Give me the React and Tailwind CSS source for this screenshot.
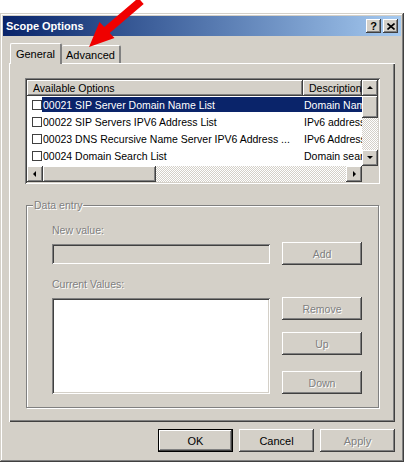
import React from 'react';

const raised = 'shadow-[inset_-1px_-1px_#404040,inset_1px_1px_#ffffff,inset_-2px_-2px_#808080,inset_2px_2px_#d4d0c8]';
const sunken = 'shadow-[inset_1px_1px_#808080,inset_-1px_-1px_#ffffff,inset_2px_2px_#404040,inset_-2px_-2px_#d4d0c8]';
const disabledText = 'text-[#808080] [text-shadow:1px_1px_#ffffff]';
const dither = 'bg-[image:repeating-conic-gradient(#ffffff_0_25%,#d4d0c8_0_50%)] bg-[length:2px_2px]';

function Arrow({ dir }) {
  // little black triangles for scroll buttons
  const pts = {
    up: '1,5 4,2 7,5',
    down: '1,2 4,5 7,2',
    left: '5,1 2,4 5,7',
    right: '3,1 6,4 3,7',
  }[dir];
  return (
    <svg width="8" height="8" viewBox="0 0 8 8">
      <polygon points={pts} fill="#000" />
    </svg>
  );
}

function ScrollBtn({ dir }) {
  return (
    <div className={`w-[16px] h-[16px] bg-[#d4d0c8] flex items-center justify-center ${raised}`}>
      <Arrow dir={dir} />
    </div>
  );
}

function Btn({ children, disabled, isDefault, className = '' }) {
  return (
    <div className={`${isDefault ? 'border border-black' : ''} ${className}`}>
      <div className={`h-full flex items-center justify-center bg-[#d4d0c8] ${raised} ${disabled ? disabledText : 'text-black'}`}>
        {children}
      </div>
    </div>
  );
}

export default function App() {
  const rows = [
    { code: '00021 SIP Server Domain Name List', desc: 'Domain Name', sel: true },
    { code: '00022 SIP Servers IPV6 Address List', desc: 'IPv6 address' },
    { code: '00023 DNS Recursive Name Server IPV6 Address ...', desc: 'IPv6 Address' },
    { code: '00024 Domain Search List', desc: 'Domain search' },
  ];

  return (
    <div className="relative w-[404px] h-[462px] bg-white pt-[13px] overflow-hidden font-['Liberation_Sans',Arial,sans-serif] text-[10.5px] leading-[12px]">
      {/* window */}
      <div className={`h-[449px] bg-[#d4d0c8] p-[3px] flex flex-col shadow-[inset_-1px_-1px_#404040,inset_1px_1px_#d4d0c8,inset_-2px_-2px_#808080,inset_2px_2px_#ffffff]`}>
        {/* title bar */}
        <div className="h-[20px] flex items-center pl-[3px] pr-[3px] bg-gradient-to-r from-[#0a246a] to-[#a6caf0]">
          <span className="flex-1 text-white font-bold text-[11px]">Scope Options</span>
          <div className={`w-[15px] h-[14px] bg-[#d4d0c8] flex items-center justify-center font-bold text-[11px] text-black ${raised}`}>?</div>
          <div className={`ml-[2px] w-[15px] h-[14px] bg-[#d4d0c8] flex items-center justify-center ${raised}`}>
            <svg width="8" height="7" viewBox="0 0 8 7">
              <path d="M0.5 0.5 L7.5 6.5 M7.5 0.5 L0.5 6.5" stroke="#000" strokeWidth="1.6" />
            </svg>
          </div>
        </div>

        <div className="flex-1 px-[6px] pt-[7px] flex flex-col">
          {/* tabs */}
          <div className="h-[20px] flex items-end">
            <div className="relative z-10 h-[21px] w-[52px] ml-[1px] -mb-[1px] bg-[#d4d0c8] border-l border-t border-white border-r-2 border-r-[#808080] rounded-t-[2px] flex items-start justify-center pt-[4px] text-[11px]">
              General
            </div>
            <div className="h-[18px] w-[59px] bg-[#d4d0c8] border-t border-white border-r-2 border-r-[#808080] rounded-t-[2px] flex items-start justify-center pt-[3px] text-[11px]">
              Advanced
            </div>
          </div>

          {/* tab panel */}
          <div className={`h-[359px] px-[15px] pt-[14px] bg-[#d4d0c8] border-l border-t border-white shadow-[inset_-1px_-1px_#404040,inset_-2px_-2px_#808080]`}>
            {/* list view */}
            <div className={`h-[106px] w-[355px] p-[2px] bg-white ${sunken}`}>
              <div className="h-full grid grid-cols-[1fr_16px] grid-rows-[1fr_16px]">
                <div className="overflow-hidden">
                  <div className="flex h-[16px]">
                    <div className={`w-[276px] h-full bg-[#d4d0c8] pl-[6px] flex items-center ${raised}`}>Available Options</div>
                    <div className={`flex-1 h-full bg-[#d4d0c8] pl-[6px] flex items-center ${raised}`}>Description</div>
                  </div>
                  {rows.map((r) => (
                    <div key={r.code} className="h-[17px] flex items-center">
                      <div className="w-[19px] pl-[5px] flex items-center">
                        <div className="w-[10px] h-[10px] bg-white border border-[#404040]" />
                      </div>
                      <div className={`h-[15px] flex items-center flex-1 ${r.sel ? 'bg-[#0a246a] text-white' : 'text-black'}`}>
                        <div className="w-[257px] pl-[1px] whitespace-nowrap overflow-hidden">{r.code}</div>
                        <div className="flex-1 pl-[5px] whitespace-nowrap overflow-hidden">{r.desc}</div>
                      </div>
                    </div>
                  ))}
                </div>
                {/* vertical scrollbar */}
                <div className={`flex flex-col ${dither}`}>
                  <ScrollBtn dir="up" />
                  <div className={`h-[22px] bg-[#d4d0c8] ${raised}`} />
                  <div className="flex-1" />
                  <ScrollBtn dir="down" />
                </div>
                {/* horizontal scrollbar */}
                <div className={`flex ${dither}`}>
                  <ScrollBtn dir="left" />
                  <div className={`w-[113px] bg-[#d4d0c8] ${raised}`} />
                  <div className="flex-1" />
                  <ScrollBtn dir="right" />
                </div>
                <div className="bg-[#d4d0c8]" />
              </div>
            </div>

            {/* data entry group */}
            <div className="relative mt-[21px] mx-[1px] w-[353px] h-[203px] border border-[#808080] shadow-[inset_1px_1px_#ffffff,1px_1px_#ffffff] pl-[25px] pt-[18px]">
              <span className={`absolute -top-[7px] left-[6px] px-[1px] bg-[#d4d0c8] ${disabledText}`}>Data entry</span>
              <div className={disabledText}>New value:</div>
              <div className="mt-[6px] flex items-center gap-[12px]">
                <div className={`w-[218px] h-[20px] bg-[#d4d0c8] ${sunken}`} />
                <Btn disabled className="w-[80px] h-[23px]">Add</Btn>
              </div>
              <div className={`mt-[13px] ${disabledText}`}>Current Values:</div>
              <div className="mt-[7px] flex items-start gap-[12px]">
                <div className={`mt-[1px] w-[218px] h-[96px] bg-white ${sunken}`} />
                <div className="flex flex-col">
                  <Btn disabled className="w-[80px] h-[23px]">Remove</Btn>
                  <Btn disabled className="mt-[12px] w-[80px] h-[23px]">Up</Btn>
                  <Btn disabled className="mt-[16px] w-[80px] h-[23px]">Down</Btn>
                </div>
              </div>
            </div>
          </div>

          {/* dialog buttons */}
          <div className="mt-[7px] flex justify-end gap-[6px] text-[11px]">
            <Btn isDefault className="w-[75px] h-[23px]">OK</Btn>
            <Btn className="w-[75px] h-[23px]">Cancel</Btn>
            <Btn disabled className="w-[75px] h-[23px]">Apply</Btn>
          </div>
        </div>
      </div>

      {/* red annotation arrow */}
      <svg className="absolute left-0 top-0 pointer-events-none" width="404" height="60" viewBox="0 0 404 60">
        <polygon points="138.3,-2 143.7,3.9 109.7,32.9 114.5,38 89,47 99.5,22 104.3,27.1" fill="#f00000" />
      </svg>
    </div>
  );
}
